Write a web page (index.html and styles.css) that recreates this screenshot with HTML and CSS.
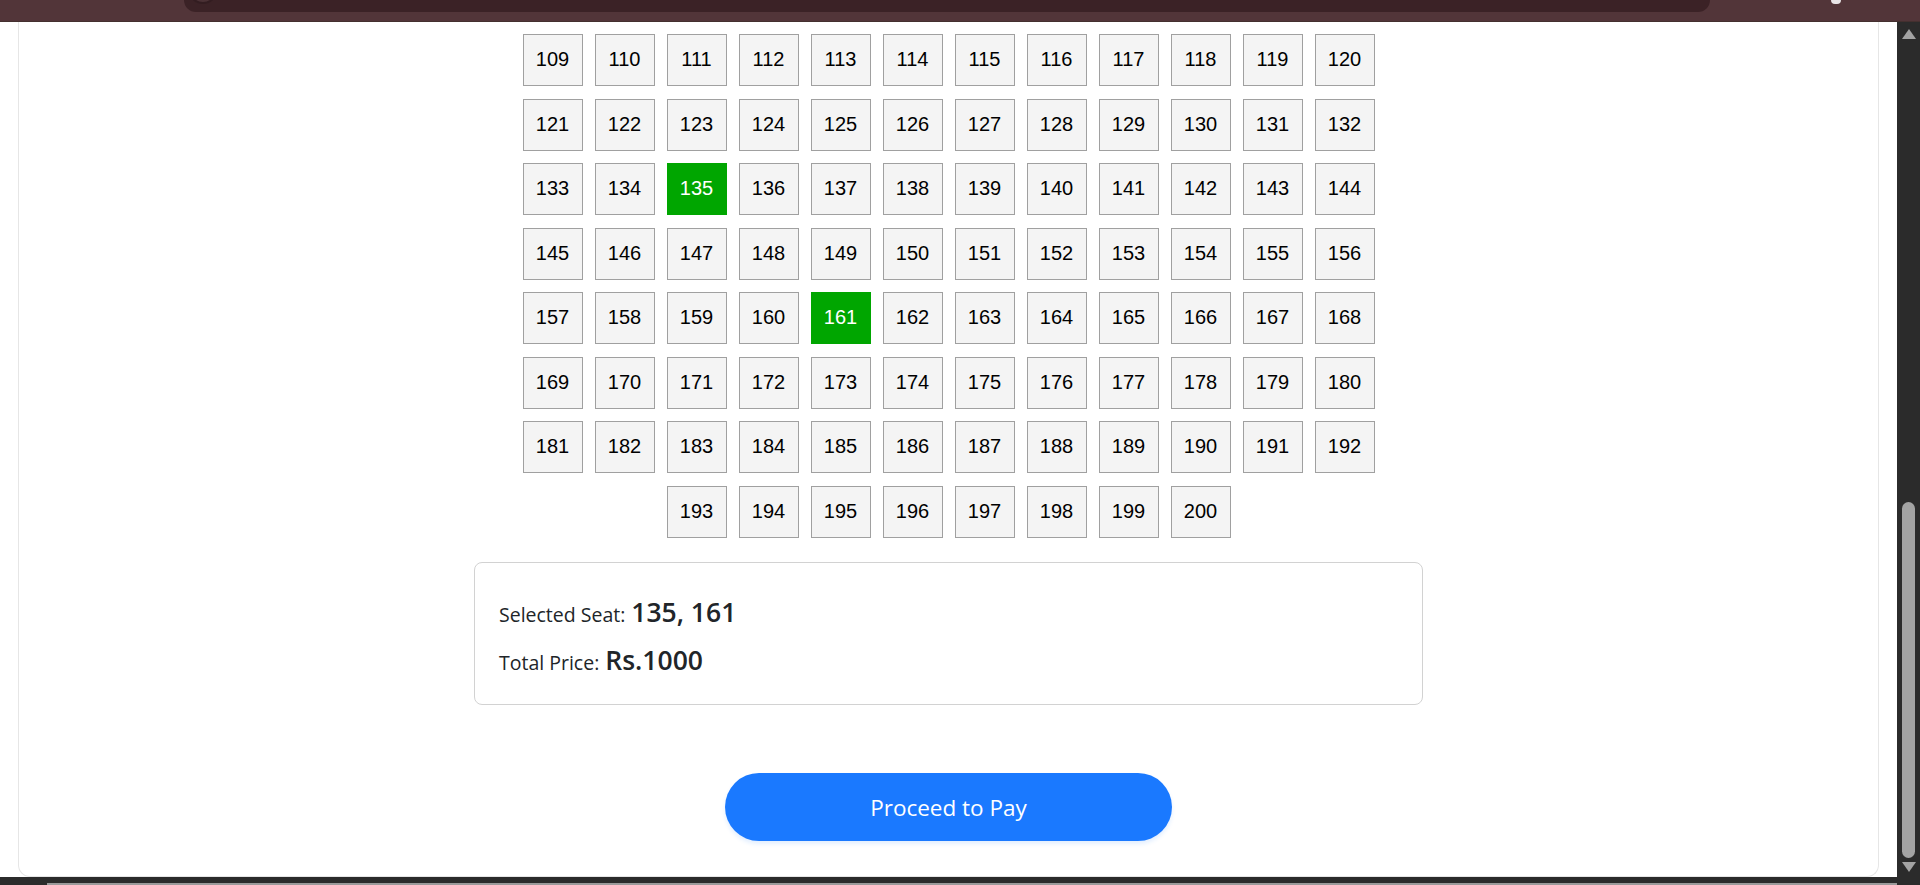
FILE: index.html
```html
<!DOCTYPE html>
<html lang="en">
<head>
<meta charset="utf-8">
<title>Select Seats</title>
<link rel="stylesheet" href="styles.css">
</head>
<body>
<div class="window">
  <div class="chrome-top">
    <div class="addressbar"><span class="addr-icon"></span></div>
    <span class="ext-icon"></span>
  </div>
  <div class="viewport">
    <div class="page">
      <div class="card">
        <div class="seats" id="seats"></div>
        <div class="summary">
          <div class="sum-row"><span class="sum-label">Selected Seat:</span><span class="sum-value">135, 161</span></div>
          <div class="sum-row"><span class="sum-label">Total Price:</span><span class="sum-value">Rs.1000</span></div>
        </div>
        <div class="actions">
          <button class="pay-btn">Proceed to Pay</button>
        </div>
      </div>
    </div>
    <div class="scrollbar">
      <span class="arrow-up"></span>
      <div class="track"><span class="thumb"></span></div>
      <span class="arrow-down"></span>
    </div>
  </div>
  <div class="chrome-bottom"><span class="hbar"></span></div>
</div>
<script>
  var box = document.getElementById('seats');
  var selected = [135, 161];
  for (var i = 109; i <= 200; i++) {
    var d = document.createElement('div');
    d.className = 'seat' + (selected.indexOf(i) >= 0 ? ' selected' : '');
    d.textContent = i;
    box.appendChild(d);
  }
</script>
</body>
</html>
```
FILE: styles.css
```css
* { box-sizing: border-box; }
html, body { margin: 0; padding: 0; height: 100%; overflow: hidden; }
body { background: #ffffff; font-family: "Open Sans", "Noto Sans", sans-serif; color: #212529; }

.window { display: flex; flex-direction: column; width: 1920px; height: 885px; }

.chrome-top {
  height: 22px;
  flex: 0 0 22px;
  background: #523539;
  border-bottom: 1px solid #44302f;
  display: flex;
  align-items: flex-start;
  position: relative;
}
.addressbar {
  margin-left: 184px;
  width: 1526px;
  height: 12px;
  background: #3b2226;
  border-radius: 0 0 14px 14px;
  position: relative;
  overflow: hidden;
}
.addr-icon {
  position: absolute;
  left: 4px;
  top: -26px;
  width: 30px;
  height: 30px;
  border-radius: 50%;
  background: #4b3135;
  border: 2px solid #331d21;
}
.ext-icon {
  margin-left: 121px;
  width: 10px;
  height: 4px;
  background: #e8e4e6;
  border-radius: 0 0 4px 4px;
}

.viewport { flex: 1; display: flex; min-height: 0; }
.page { flex: 1; display: flex; min-width: 0; background: #fff; }
.card {
  flex: 1;
  margin: 0 18px 0 18px;
  border: 1px solid #e6e6e6;
  border-top: none;
  border-radius: 0 0 12px 12px;
  display: flex;
  flex-direction: column;
  align-items: center;
  padding-top: 12px;
}

.seats {
  width: 852px;
  display: flex;
  flex-wrap: wrap;
  justify-content: center;
  gap: 12.5px 12px;
}
.seat {
  width: 60px;
  height: 52px;
  border: 1px solid #a0a0a0;
  background: #f4f4f4;
  color: #000;
  font-family: "Liberation Sans", Arial, sans-serif;
  font-size: 20px;
  display: flex;
  align-items: center;
  justify-content: center;
  padding-bottom: 1px;
}
.seat.selected { background: #00a600; border-color: #00a600; color: #fff; }

.summary {
  margin-top: 24.5px;
  width: 949px;
  height: 143px;
  border: 1px solid #d2d2d2;
  border-radius: 8px;
  padding: 30px 24px 22px 24px;
  display: flex;
  flex-direction: column;
  justify-content: center;
  gap: 7px;
}
.sum-row { display: flex; align-items: baseline; gap: 6px; line-height: 39px; color: #212529; }
.sum-label { font-size: 19.5px; }
.sum-value { font-size: 26.5px; font-weight: 600; }

.actions { margin-top: 68px; display: flex; justify-content: center; }
.pay-btn {
  width: 447px;
  height: 68px;
  border: none;
  border-radius: 34px;
  background: #1a79ff;
  color: #fff;
  font-family: "Open Sans", "Noto Sans", sans-serif;
  font-size: 22.5px;
  box-shadow: 0 3px 4px rgba(26, 121, 255, 0.12);
  padding: 0;
}

.scrollbar {
  flex: 0 0 23px;
  background: #2b2b2b;
  display: flex;
  flex-direction: column;
  align-items: center;
  padding: 7px 0 5px 0;
}
.arrow-up, .arrow-down {
  width: 0; height: 0;
  border-left: 7.5px solid transparent;
  border-right: 7.5px solid transparent;
}
.arrow-up { border-bottom: 10px solid #a3a3a3; }
.arrow-down { border-top: 10px solid #a3a3a3; }
.track { flex: 1; width: 100%; display: flex; flex-direction: column; justify-content: flex-end; align-items: center; padding-bottom: 4px; }
.thumb { width: 13px; height: 356px; background: #a3a3a3; border-radius: 7px; }

.chrome-bottom {
  flex: 0 0 8px;
  background: #2b2b2b;
  display: flex;
  align-items: flex-end;
  padding-left: 47px;
}
.hbar { width: 1850px; height: 2px; background: #9a9a9a; }
```
